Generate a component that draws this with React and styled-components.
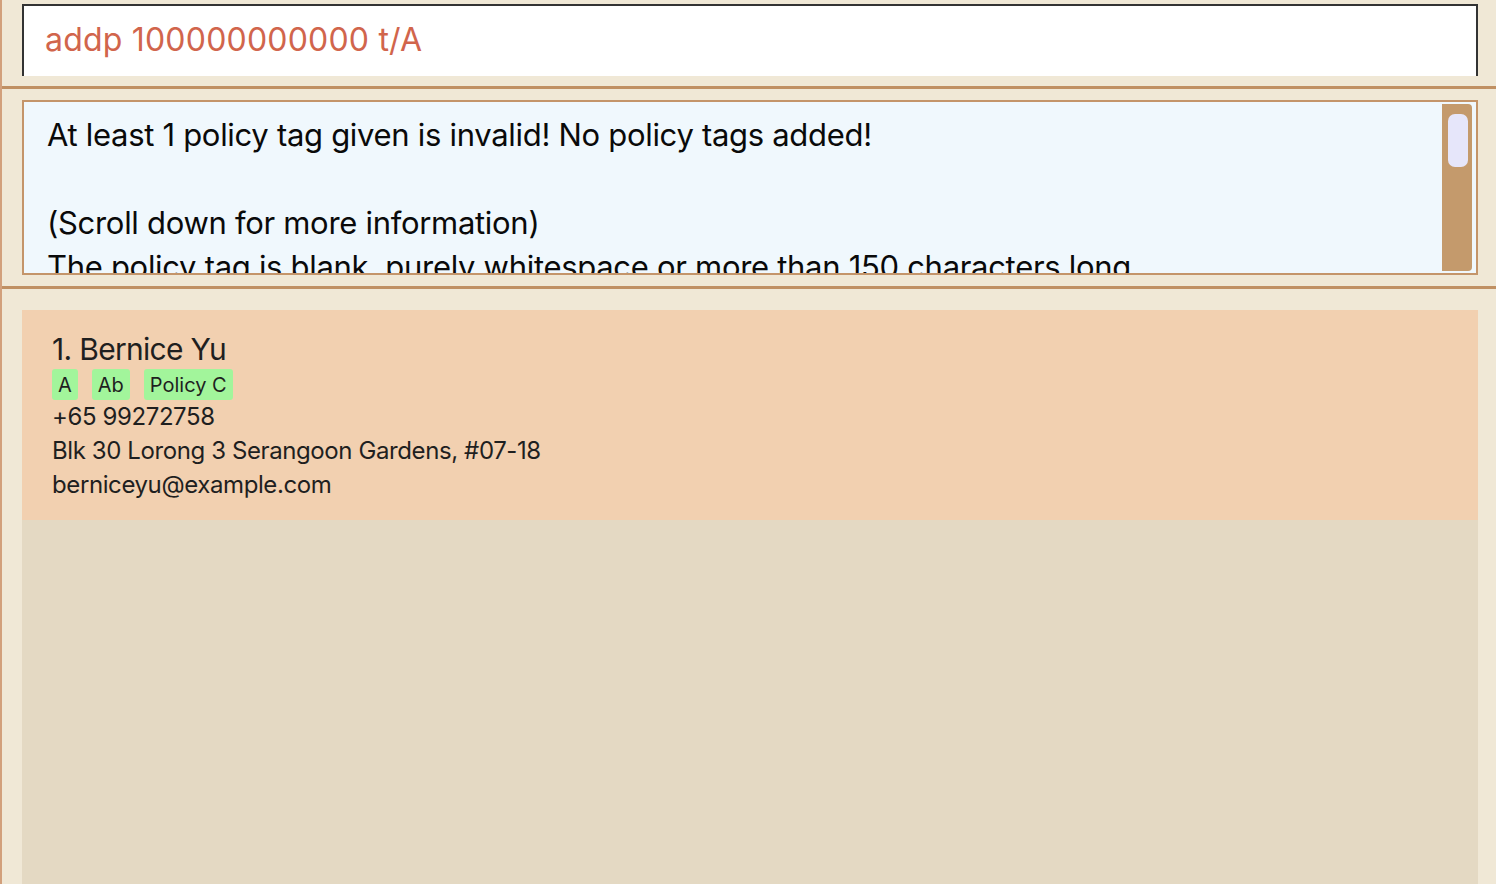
import React from "react";
import styled, { createGlobalStyle } from "styled-components";

const GlobalStyle = createGlobalStyle`
  html, body {
    margin: 0;
    padding: 0;
    overflow: hidden;
  }
  body {
    font-family: Inter, "Open Sans", "Liberation Sans", sans-serif;
  }
`;

const person = {
  index: 1,
  name: "Bernice Yu",
  tags: ["A", "Ab", "Policy C"],
  phone: "+65 99272758",
  address: "Blk 30 Lorong 3 Serangoon Gardens, #07-18",
  email: "berniceyu@example.com",
};

const App = () => {
  return (
    <Window>
      <GlobalStyle />
      <Section $top={4} $bottom={10}>
        <CommandBox>addp 100000000000 t/A</CommandBox>
      </Section>
      <Separator />
      <Section $top={11} $bottom={11}>
        <ResultBox>
          <ResultText>
            <Line>At least 1 policy tag given is invalid! No policy tags added!</Line>
            <Line>&nbsp;</Line>
            <Line>(Scroll down for more information)</Line>
            <Line>
              The policy tag is blank, purely whitespace or more than 150 characters long.
            </Line>
          </ResultText>
          <ScrollTrack>
            <ScrollThumb />
          </ScrollTrack>
        </ResultBox>
      </Section>
      <Separator />
      <ListSection>
        <PersonList>
          <Card>
            <Name>
              {person.index}. {person.name}
            </Name>
            <Tags>
              {person.tags.map((tag) => (
                <Tag key={tag}>{tag}</Tag>
              ))}
            </Tags>
            <Detail>{person.phone}</Detail>
            <Detail>{person.address}</Detail>
            <Detail>{person.email}</Detail>
          </Card>
        </PersonList>
      </ListSection>
    </Window>
  );
};

const Window = styled.div`
  display: flex;
  flex-direction: column;
  width: 1496px;
  height: 884px;
  box-sizing: border-box;
  background: #f0e8d6;
  border-left: 2px solid #d2a07c;
  overflow: hidden;
`;

const Section = styled.div`
  padding: ${(p) => p.$top}px 18px ${(p) => p.$bottom}px 20px;
`;

const CommandBox = styled.div`
  box-sizing: border-box;
  height: 72px;
  background: #ffffff;
  border: 2px solid #333333;
  border-bottom: none;
  padding: 0 0 4px 21px;
  display: flex;
  align-items: center;
  font-size: 32px;
  color: #d1654c;
  letter-spacing: 0.2px;
`;

const Separator = styled.div`
  height: 3px;
  background: #c09063;
  flex-shrink: 0;
`;

const ResultBox = styled.div`
  box-sizing: border-box;
  height: 175px;
  border: 2px solid #c4956a;
  background: #f0f8fd;
  display: flex;
`;

const ResultText = styled.div`
  flex: 1;
  overflow: hidden;
  padding: 11px 0 0 23px;
  font-size: 31px;
  line-height: 44px;
  color: #0a0a0a;
  letter-spacing: -0.3px;
`;

const Line = styled.div`
  white-space: nowrap;
`;

const ScrollTrack = styled.div`
  width: 30px;
  margin: 2px 4px 2px 0;
  background: #c49a6c;
  border-radius: 0 4px 4px 0;
  padding: 10px 4px 0 6px;
  box-sizing: border-box;
`;

const ScrollThumb = styled.div`
  height: 53px;
  background: #e6e6fa;
  border-radius: 7px;
`;

const ListSection = styled.div`
  flex: 1;
  display: flex;
  padding: 21px 18px 0 20px;
  min-height: 0;
`;

const PersonList = styled.div`
  flex: 1;
  background: #e4d9c3;
`;

const Card = styled.div`
  background: #f2d0b0;
  padding: 21px 30px 18px;
  color: #1f1f1f;
`;

const Name = styled.div`
  font-size: 30px;
  line-height: 36px;
  letter-spacing: -0.7px;
`;

const Tags = styled.div`
  display: flex;
  gap: 14px;
  margin-top: 2px;
`;

const Tag = styled.span`
  background: #a2f59b;
  border-radius: 3px;
  padding: 0 6px;
  height: 31px;
  display: flex;
  align-items: center;
  font-size: 20px;
  letter-spacing: 0px;
`;

const Detail = styled.div`
  font-size: 24px;
  line-height: 34px;
  letter-spacing: -0.4px;
`;

export default App;
